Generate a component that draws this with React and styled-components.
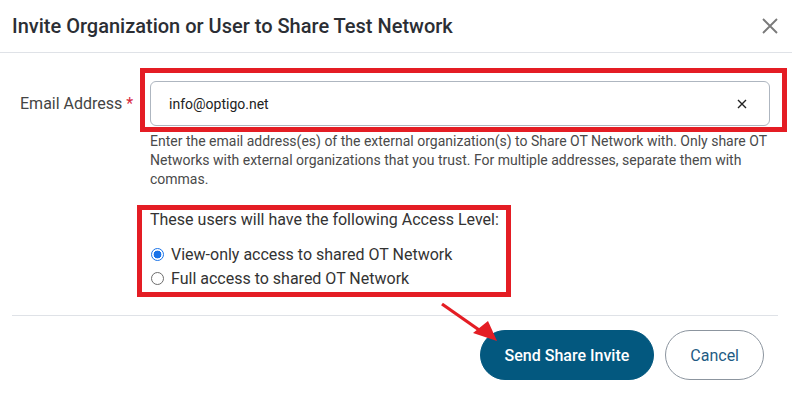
import styled, { createGlobalStyle } from "styled-components"

const GlobalStyle = createGlobalStyle`
    body{
        margin:0;
        background:#fff;
        font-family: Roboto, "Liberation Sans", sans-serif;
        color:#333;
    }
`
const Dialog = styled.div`
    position:relative;
    width:792px;
    height:393px;
    background:#fff;
`
const Header = styled.header`
    height:52px;
    display:flex;
    align-items:center;
    justify-content:space-between;
    padding:0 14px 0 12px;
    border-bottom:1px solid #dfe2e7;
`
const Title = styled.h1`
    margin:0;
    font-size:20px;
    font-weight:500;
    color:#2b2e34;
`
const IconButton = styled.button`
    display:flex;
    align-items:center;
    justify-content:center;
    background:transparent;
    border:none;
    padding:0;
    cursor:pointer;
`
const Body = styled.div`
    display:grid;
    grid-template-columns:140px 647px;
    padding-top:15px;
`
const Label = styled.label`
    padding:26px 0 0 20px;
    font-size:16px;
    line-height:20px;
    color:#444;
`
const Req = styled.span`
    color:#d8283e;
`
const FieldColumn = styled.div`
    display:flex;
    flex-direction:column;
`
const Highlight = styled.div`
    border:5px solid #e41d24;
    padding:${p => p.$pad};
    margin:${p => p.$margin || 0};
    width:${p => p.$width ? p.$width + "px" : "auto"};
    box-sizing:border-box;
`
const InputBox = styled.div`
    height:45px;
    display:flex;
    align-items:center;
    border:1px solid #aeb6c0;
    border-radius:6px;
    padding:0 22px 0 18px;
    box-sizing:border-box;
`
const EmailInput = styled.input`
    flex:1;
    border:none;
    outline:none;
    font-family:inherit;
    font-size:14px;
    color:#222;
    padding:0;
`
const Help = styled.p`
    margin:0;
    padding-left:10px;
    width:630px;
    font-size:14px;
    line-height:19px;
    color:#4a4a4a;
`
const AccessTitle = styled.div`
    font-size:16px;
    line-height:20px;
    color:#333;
    white-space:nowrap;
    margin-bottom:12px;
`
const RadioRow = styled.label`
    display:flex;
    align-items:center;
    gap:7px;
    height:24px;
    font-size:16px;
    color:#333;
`
const Radio = styled.input`
    appearance:none;
    margin:0 0 0 1px;
    width:13px;
    height:13px;
    border-radius:50%;
    border:1px solid #6d6d6d;
    box-sizing:border-box;
    &:checked{
        border:1px solid #1a73e8;
        background: radial-gradient(circle, #1a73e8 0 3.6px, #fff 4.2px);
    }
`
const Footer = styled.footer`
    margin:18px 14px 0 12px;
    border-top:1px solid #dfe2e7;
    padding:14px 14px 0 0;
    display:flex;
    justify-content:flex-end;
    gap:11px;
`
const Button = styled.button`
    height:50px;
    border-radius:25px;
    font-family:inherit;
    font-size:16px;
    cursor:pointer;
    padding:0 24px;
    font-weight:${p => p.$primary ? 500 : 400};
    background:${p => p.$primary ? "#03587f" : "#fff"};
    color:${p => p.$primary ? "#fff" : "#1e5b84"};
    border:1px solid ${p => p.$primary ? "#03587f" : "#8c959f"};
`
const Arrow = styled.svg`
    position:absolute;
    left:0;
    top:0;
    pointer-events:none;
`

const App = () => {
    return (
        <Dialog>
            <GlobalStyle/>
            <Header>
                <Title>Invite Organization or User to Share Test Network</Title>
                <IconButton aria-label="close">
                    <svg width="16" height="16" viewBox="0 0 16 16">
                        <path d="M1 1 L15 15 M15 1 L1 15" stroke="#7a7a7a" strokeWidth="1.9"/>
                    </svg>
                </IconButton>
            </Header>
            <Body>
                <Label>Email Address <Req>*</Req></Label>
                <FieldColumn>
                    <Highlight $pad="8px 12px 1px 5px">
                        <InputBox>
                            <EmailInput type="text" defaultValue="info@optigo.net"/>
                            <IconButton aria-label="clear">
                                <svg width="10" height="10" viewBox="0 0 10 10">
                                    <path d="M1 1 L9 9 M9 1 L1 9" stroke="#222" strokeWidth="1.4"/>
                                </svg>
                            </IconButton>
                        </InputBox>
                    </Highlight>
                    <Help>
                        Enter the email address(es) of the external organization(s) to Share OT Network with. Only share OT Networks with external organizations that you trust. For multiple addresses, separate them with commas.
                    </Help>
                    <Highlight $pad="0 8px 2px 8px" $margin="16px 0 0 -3px" $width={374}>
                        <AccessTitle>These users will have the following Access Level:</AccessTitle>
                        <RadioRow><Radio type="radio" name="access" defaultChecked/>View-only access to shared OT Network</RadioRow>
                        <RadioRow><Radio type="radio" name="access"/>Full access to shared OT Network</RadioRow>
                    </Highlight>
                </FieldColumn>
            </Body>
            <Footer>
                <Button $primary>Send Share Invite</Button>
                <Button>Cancel</Button>
            </Footer>
            <Arrow width="792" height="393">
                <line x1="442" y1="304" x2="482" y2="332" stroke="#e41d24" strokeWidth="3.2"/>
                <polygon points="497,341 473,333 488,321" fill="#e41d24"/>
            </Arrow>
        </Dialog>
    )
}

export default App
